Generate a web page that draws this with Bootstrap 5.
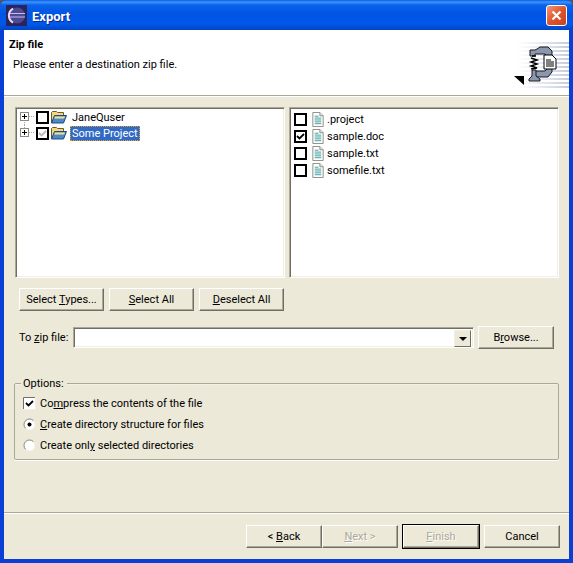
<!DOCTYPE html>
<html lang="en">
<head>
  <meta charset="UTF-8">
  <meta name="viewport" content="width=device-width, initial-scale=1">
  <title>Export</title>
  <link href="https://cdn.jsdelivr.net/npm/bootstrap@5.3.0/dist/css/bootstrap.min.css" rel="stylesheet">
  <style>
    html, body { height: 563px; overflow: hidden; }
    body { background: #4a5570; font-family: Roboto, "Liberation Sans", sans-serif; font-size: 11px; line-height: 15px; color: #000; }
    .wiz-window { width: 573px; height: 563px; background: #0a3fd6; border-radius: 7px 7px 0 0; overflow: hidden; }
    .wiz-title { height: 30px; background: linear-gradient(#0a5be0 0, #3d95ff 2px, #0a62ea 5px, #0054e3 14px, #0058ea 24px, #0247c8 29px); padding: 1px 6px 0 6px; }
    .wiz-title-text { color: #fff; font-weight: 700; font-size: 13px; text-shadow: 1px 1px #0a2a8c; margin-left: 5px; padding-top: 1px; }
    .wiz-close { width: 21px; height: 21px; background: linear-gradient(135deg, #ee9a80, #e0552c 50%, #c8401c); border: 1px solid #fff; border-radius: 3px; margin-left: auto; }
    .wiz-body { flex: 1; background: #ece9d8; margin: 0 4px 4px; min-height: 0; }
    .wiz-head { height: 65px; background: #fff; padding: 7px 0 0 5px; position: relative; }
    .wiz-head-title { font-weight: 700; }
    .wiz-head-msg { margin: 5px 0 0 4px; }
    .wiz-head-art { position: absolute; right: 0; bottom: 5px; }
    .wiz-rule { height: 2px; background: linear-gradient(#aca899 50%, #fff 50%); }
    .wiz-content { padding: 10px 10px 0 11px; flex: 1; }
    .wiz-sunken { background: #fff; border: 1px solid; border-color: #aca899 #fff #fff #aca899; box-shadow: inset 1px 1px #716f64, inset -1px -1px #f1efe2; }
    .wiz-pane { width: 270px; height: 171px; }
    .wiz-panes { gap: 4px; }
    .wiz-row { height: 16px; white-space: nowrap; }
    .wiz-list { padding: 3px 0 0 4px; }
    .wiz-list .wiz-row { height: 17px; }
    .wiz-tree { padding: 1px 0 0 4px; }
    .wiz-expander { width: 16px; height: 16px; flex: none; }
    .wiz-check { width: 13px; height: 13px; border: 2px solid #000; background: #fff; flex: none; margin-right: 2px; display: block; }
    .wiz-tree .wiz-check { margin-right: 1px; }
    .wiz-icon { flex: none; }
    .wiz-doc { margin-left: 3px; }
    .wiz-text { margin-left: 1px; padding: 0 2px; }
    .wiz-tree .wiz-text { margin-left: 3px; }
    .wiz-selected { background: #316ac5; color: #fff; outline: 1px dotted #e8a020; outline-offset: -1px; height: 15px; }
    .wiz-btn { background: #ece9d8; font: inherit; color: #000; height: 23px; padding: 0; border: 1px solid; border-color: #fff #716f64 #716f64 #fff; box-shadow: inset -1px -1px #aca899; border-radius: 0; width: 85px; }
    .wiz-btn:hover, .wiz-btn:active { background: #ece9d8; color: #000; border-color: #fff #716f64 #716f64 #fff; }
    .wiz-btn:disabled { background: #ece9d8; color: #aca899; opacity: 1; border-color: #fff #716f64 #716f64 #fff; text-shadow: 1px 1px #fff; }
    .wiz-btn-default { outline: 1px solid #000; outline-offset: 0; }
    .wiz-select-row { gap: 5px; padding: 10px 0 0 4px; }
    .wiz-zip-row { padding: 15px 0 0 4px; }
    .wiz-zip-label { width: 54px; }
    .wiz-combo { width: 401px; height: 21px; margin-right: 4px; padding: 2px; position: relative; }
    .wiz-combo-btn { width: 17px; height: 17px; background: #ece9d8; border: 1px solid; border-color: #f1efe2 #716f64 #716f64 #f1efe2; margin-left: auto; }
    .wiz-combo-btn i { width: 0; height: 0; border: 4px solid transparent; border-top-color: #000; border-bottom: 0; display: block; }
    .wiz-browse { width: 76px; }
    .wiz-group { margin: 34px 0 0 -1px; height: 77px; border: 1px solid #aca899; box-shadow: 0 1px #fff, inset 0 1px #f4f2e8; position: relative; padding: 9px 0 0 8px; border-radius: 2px; }
    .wiz-legend { position: absolute; top: -8px; left: 6px; background: #ece9d8; padding: 0 3px 0 2px; }
    .wiz-opt { height: 21px; }
    .wiz-opt-check { width: 13px; height: 13px; flex: none; margin-right: 4px; display: block; }
    .wiz-foot-rule { margin-top: auto; }
    .wiz-foot { padding: 11px 9px 11px 242px; height: 45px; }
    .wiz-foot .wiz-btn { width: 76px; }
    .wiz-foot-gap { width: 5px; flex: none; }
  </style>
</head>
<body>
<svg width="0" height="0" class="position-absolute">
  <defs>
    <symbol id="ic-doc" viewBox="0 0 12 16">
      <path d="M.5.5h7.500l3.500 3.500v11.500h-11z" fill="#fff" stroke="#8a8a80"/>
      <path d="M8 .5v3.500h3.500" fill="#e8e8e0" stroke="#8a8a80"/>
      <path d="M2.500 4.500h4M2.500 6.500h7M2.500 8.500h7M2.500 10.500h7M2.500 12.500h7" stroke="#3a9a9a"/>
    </symbol>
    <symbol id="ic-folder" viewBox="0 0 17 14">
      <path d="M1.500 13V2.500l1-1h4l1 1h6v3" fill="#f6d878" stroke="#6a5a30"/>
      <path d="M4 6h10" stroke="#fff"/>
      <path d="M1.500 13l3-7.500h12l-3 7.500z" fill="#4a8ac8" stroke="#1e4a80"/>
      <path d="M5 6.500h10l-.8 2H4.200z" fill="#f8e090"/>
    </symbol>
    <symbol id="ic-exp" viewBox="0 0 16 16">
      <path d="M9 7.500h6" stroke="#aca899" stroke-dasharray="1 1"/>
      <rect x=".5" y="3.500" width="8" height="8" fill="#fff" stroke="#8a8a80"/>
      <path d="M2 7.500h5M4.500 5v5" stroke="#000"/>
    </symbol>
  </defs>
</svg>
<div class="wiz-window d-flex flex-column">
  <div class="wiz-title d-flex align-items-center flex-none">
    <svg width="21" height="21" viewBox="0 0 21 21">
      <rect width="21" height="21" fill="#2a2458"/>
      <circle cx="11" cy="10.500" r="8" fill="#4c4a90"/>
      <path d="M3 8.500h16M3 12h16" stroke="#c8b8f0" stroke-width="1.200"/>
      <path d="M7 3.500A8 8 0 0 0 7 17.500" fill="none" stroke="#e8d8ff" stroke-width="2"/>
    </svg>
    <span class="wiz-title-text">Export</span>
    <div class="wiz-close d-flex align-items-center justify-content-center">
      <svg width="11" height="11" viewBox="0 0 11 11"><path d="M1.500 1.500l8 8M9.500 1.500l-8 8" stroke="#fff" stroke-width="2.200"/></svg>
    </div>
  </div>
  <div class="wiz-body d-flex flex-column">
    <div class="wiz-head">
      <div class="wiz-head-title">Zip file</div>
      <div class="wiz-head-msg">Please enter a destination zip file.</div>
      <svg class="wiz-head-art" width="56" height="50" viewBox="0 0 56 50">
        <defs>
          <linearGradient id="fade" x1="0" x2="1" y1="0" y2="0"><stop offset="0" stop-color="#d0d6e4" stop-opacity="0"/><stop offset="1" stop-color="#c4cbdc"/></linearGradient>
          <pattern id="lines" width="4" height="4" patternUnits="userSpaceOnUse"><rect width="4" height="2" fill="#fff"/></pattern>
        </defs>
        <rect x="4" y="2" width="52" height="46" fill="url(#fade)"/>
        <rect x="4" y="2" width="52" height="46" fill="url(#lines)"/>
        <path d="M1 36h10v9z" fill="#000"/>
        <path d="M17 10h5l2-1 3-2h8l4 4v21l-4 5h-13v-6h10l2-2v-13l-2-2h-10v2h-5z" fill="#8b97ae" stroke="#1a1a1a"/>
        <path d="M19 16h4M18 18l6 2-6 2 6 2-6 2 6 2-6 1" fill="none" stroke="#000" stroke-width="1.500"/>
        <path d="M19 30h4v6l4 3v2h-11v-2l3-3z" fill="#8b97ae" stroke="#1a1a1a"/>
        <path d="M31 15h8l4 4v10h-12z" fill="#fff" stroke="#000"/>
        <path d="M33 20h5M33 22h8M33 24h8M33 26h8" stroke="#000"/>
      </svg>
    </div>
    <div class="wiz-rule"></div>
    <div class="wiz-content d-flex flex-column">
      <div class="wiz-panes d-flex">
        <div class="wiz-pane wiz-sunken wiz-tree">
          <div class="wiz-row d-flex align-items-center">
            <svg class="wiz-expander"><use href="#ic-exp"/><path d="M4.500 13v3" stroke="#aca899" stroke-dasharray="1 1"/></svg>
            <span class="wiz-check"></span>
            <svg class="wiz-icon" width="17" height="14"><use href="#ic-folder"/></svg>
            <span class="wiz-text">JaneQuser</span>
          </div>
          <div class="wiz-row d-flex align-items-center">
            <svg class="wiz-expander"><use href="#ic-exp"/><path d="M4.500 0v3" stroke="#aca899" stroke-dasharray="1 1"/></svg>
            <svg class="wiz-check" viewBox="0 0 9 9"><path d="M1 4l2.500 2.500L8 2" fill="none" stroke="#bdbdb5" stroke-width="1.800"/></svg>
            <svg class="wiz-icon" width="17" height="14"><use href="#ic-folder"/></svg>
            <span class="wiz-text wiz-selected">Some Project</span>
          </div>
        </div>
        <div class="wiz-pane wiz-sunken wiz-list">
          <div class="wiz-row d-flex align-items-center">
            <span class="wiz-check"></span>
            <svg class="wiz-icon wiz-doc" width="12" height="15"><use href="#ic-doc"/></svg>
            <span class="wiz-text">.project</span>
          </div>
          <div class="wiz-row d-flex align-items-center">
            <svg class="wiz-check" viewBox="0 0 9 9"><path d="M1 4l2.500 2.500L8 2" fill="none" stroke="#000" stroke-width="1.800"/></svg>
            <svg class="wiz-icon wiz-doc" width="12" height="15"><use href="#ic-doc"/></svg>
            <span class="wiz-text">sample.doc</span>
          </div>
          <div class="wiz-row d-flex align-items-center">
            <span class="wiz-check"></span>
            <svg class="wiz-icon wiz-doc" width="12" height="15"><use href="#ic-doc"/></svg>
            <span class="wiz-text">sample.txt</span>
          </div>
          <div class="wiz-row d-flex align-items-center">
            <span class="wiz-check"></span>
            <svg class="wiz-icon wiz-doc" width="12" height="15"><use href="#ic-doc"/></svg>
            <span class="wiz-text">somefile.txt</span>
          </div>
        </div>
      </div>
      <div class="wiz-select-row d-flex">
        <button type="button" class="btn wiz-btn">Select <u>T</u>ypes...</button>
        <button type="button" class="btn wiz-btn"><u>S</u>elect All</button>
        <button type="button" class="btn wiz-btn"><u>D</u>eselect All</button>
      </div>
      <div class="wiz-zip-row d-flex align-items-center">
        <span class="wiz-zip-label">To <u>z</u>ip file:</span>
        <div class="wiz-combo wiz-sunken d-flex">
          <div class="wiz-combo-btn d-flex align-items-center justify-content-center"><i></i></div>
        </div>
        <button type="button" class="btn wiz-btn wiz-browse">B<u>r</u>owse...</button>
      </div>
      <div class="wiz-group">
        <span class="wiz-legend">Options:</span>
        <div class="wiz-opt d-flex align-items-center">
          <svg class="wiz-opt-check" viewBox="0 0 13 13">
            <rect x=".5" y=".5" width="12" height="12" fill="#fff" stroke="#f1efe2"/>
            <path d="M.5 12V.5H12" fill="none" stroke="#716f64"/>
            <path d="M3 6l2.500 2.500L10 4" fill="none" stroke="#000" stroke-width="1.800"/>
          </svg>
          <span>Co<u>m</u>press the contents of the file</span>
        </div>
        <div class="wiz-opt d-flex align-items-center">
          <svg class="wiz-opt-check" viewBox="0 0 13 13">
            <circle cx="6.500" cy="6.500" r="5.500" fill="#fff" stroke="#f1efe2"/>
            <path d="M2.600 10.400A5.500 5.500 0 0 1 10.400 2.600" fill="none" stroke="#8a8878"/>
            <circle cx="6.500" cy="6.500" r="2" fill="#000"/>
          </svg>
          <span><u>C</u>reate directory structure for files</span>
        </div>
        <div class="wiz-opt d-flex align-items-center">
          <svg class="wiz-opt-check" viewBox="0 0 13 13">
            <circle cx="6.500" cy="6.500" r="5.500" fill="#fff" stroke="#f1efe2"/>
            <path d="M2.600 10.400A5.500 5.500 0 0 1 10.400 2.600" fill="none" stroke="#8a8878"/>
          </svg>
          <span>Create onl<u>y</u> selected directories</span>
        </div>
      </div>
    </div>
    <div class="wiz-rule wiz-foot-rule"></div>
    <div class="wiz-foot d-flex">
      <button type="button" class="btn wiz-btn">&lt; <u>B</u>ack</button>
      <button type="button" class="btn wiz-btn" disabled><u>N</u>ext &gt;</button>
      <div class="wiz-foot-gap"></div>
      <button type="button" class="btn wiz-btn wiz-btn-default" disabled><u>F</u>inish</button>
      <div class="wiz-foot-gap"></div>
      <button type="button" class="btn wiz-btn">Cancel</button>
    </div>
  </div>
</div>
<script src="https://cdn.jsdelivr.net/npm/bootstrap@5.3.0/dist/js/bootstrap.bundle.min.js"></script>
</body>
</html>
